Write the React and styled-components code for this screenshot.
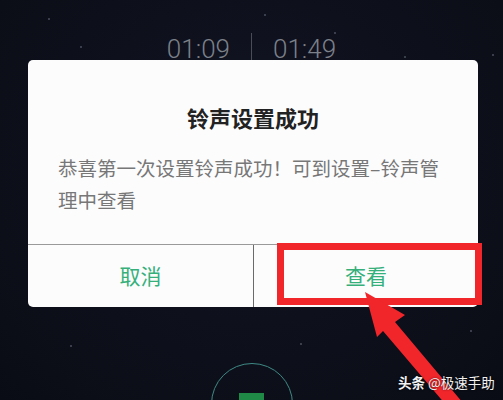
import React from "react";
import styled, { createGlobalStyle } from "styled-components";

const Global = createGlobalStyle`
  html, body { margin: 0; padding: 0; background: #0d0f19; }
  * { box-sizing: border-box; }
`;

const Screen = styled.div`
  position: relative;
  width: 503px;
  height: 400px;
  overflow: hidden;
  background: radial-gradient(ellipse at 50% 40%, #121524 0%, #0d0f1a 60%, #0a0c15 100%);
  font-family: "Noto Sans CJK SC", "Noto Sans", sans-serif;
  display: flex;
  flex-direction: column;
`;

const Progress = styled.div`
  margin-top: 3px;
  height: 2px;
  background: linear-gradient(to right, #2f4c4a 0%, #35564f 50%, #2a3136 50.5%, #262b31 100%);
`;

const TimeRow = styled.div`
  display: flex;
  align-items: center;
  justify-content: center;
  gap: 21px;
  margin-top: 30px;
  height: 27px;
`;

const Time = styled.span`
  font-family: "Roboto", "Liberation Sans", sans-serif;
  font-weight: 300;
  font-size: 26px;
  line-height: 26px;
  color: #7c8089;
  margin-top: 5px;
`;

const Divider = styled.span`
  width: 1px;
  align-self: stretch;
  background: #4a4d55;
`;

const Dialog = styled.div`
  margin-left: 28px;
  width: 450px;
  background: #fcfcfd;
  border-radius: 5px;
  display: flex;
  flex-direction: column;
`;

const Title = styled.div`
  padding-top: 42px;
  text-align: center;
  font-size: 22px;
  line-height: 30px;
  font-weight: 700;
  color: #222222;
`;

const Message = styled.p`
  margin: 20px 0 0;
  padding: 0 28px 28px 30px;
  font-size: 19.5px;
  line-height: 32px;
  color: #777777;
`;

const Actions = styled.div`
  display: grid;
  grid-template-columns: 225px 1fr;
  border-top: 1px solid #9a9a9a;
  height: 63px;
`;

const ActionButton = styled.button`
  position: relative;
  border: 0;
  background: transparent;
  font-family: inherit;
  font-size: 21px;
  color: #35b07a;
  display: flex;
  align-items: center;
  justify-content: center;
  padding: 0 0 2px;
  border-left: ${(p) => (p.$divided ? "1px solid #6a6a6a" : "0")};
`;

const Highlight = styled.span`
  position: absolute;
  left: 23px;
  right: -4px;
  top: -2px;
  bottom: 2px;
  border: 7px solid #f0262b;
  pointer-events: none;
`;

const Dock = styled.div`
  display: flex;
  justify-content: center;
  margin-top: 56px;
`;

const PlayRing = styled.div`
  width: 82px;
  height: 82px;
  border-radius: 50%;
  border: 1px solid #3f8a86;
  display: flex;
  justify-content: center;
  padding-top: 29px;
`;

const PlayKey = styled.div`
  width: 25px;
  height: 30px;
  background: #1f8a45;
`;

const Star = styled.span`
  position: absolute;
  width: 2px;
  height: 2px;
  border-radius: 50%;
  background: #4a4f5e;
`;

const ArrowLayer = styled.svg`
  position: absolute;
  left: 0;
  top: 0;
  pointer-events: none;
`;

const Watermark = styled.div`
  position: absolute;
  left: 398px;
  top: 373px;
  font-size: 13.5px;
  line-height: 18px;
  color: #f2f2f2;
  text-shadow: 0 0 2px rgba(0, 0, 0, 0.8);
  white-space: nowrap;
  & b { font-weight: 700; }
`;

const stars = [
  [48, 18], [264, 14], [334, 32], [80, 46], [404, 56], [492, 54], [70, 345], [300, 343], [470, 330],
];

export default function App() {
  return (
    <>
      <Global />
      <Screen>
        {stars.map(([x, y], i) => (
          <Star key={i} style={{ left: x, top: y }} />
        ))}
        <Progress />
        <TimeRow>
          <Time>01:09</Time>
          <Divider />
          <Time>01:49</Time>
        </TimeRow>
        <Dialog>
          <Title>铃声设置成功</Title>
          <Message>恭喜第一次设置铃声成功！可到设置–铃声管理中查看</Message>
          <Actions>
            <ActionButton>取消</ActionButton>
            <ActionButton $divided>
              查看
              <Highlight />
            </ActionButton>
          </Actions>
        </Dialog>
        <Dock>
          <PlayRing>
            <PlayKey />
          </PlayRing>
        </Dock>
        <ArrowLayer width="503" height="400" viewBox="0 0 503 400">
          <path
            d="M365 292 L405 315 L395 322 L463 403 L452 412 L383 331 L377 337 Z"
            fill="#f0262b"
          />
        </ArrowLayer>
        <Watermark>
          <b>头条</b> @极速手助
        </Watermark>
      </Screen>
    </>
  );
}
